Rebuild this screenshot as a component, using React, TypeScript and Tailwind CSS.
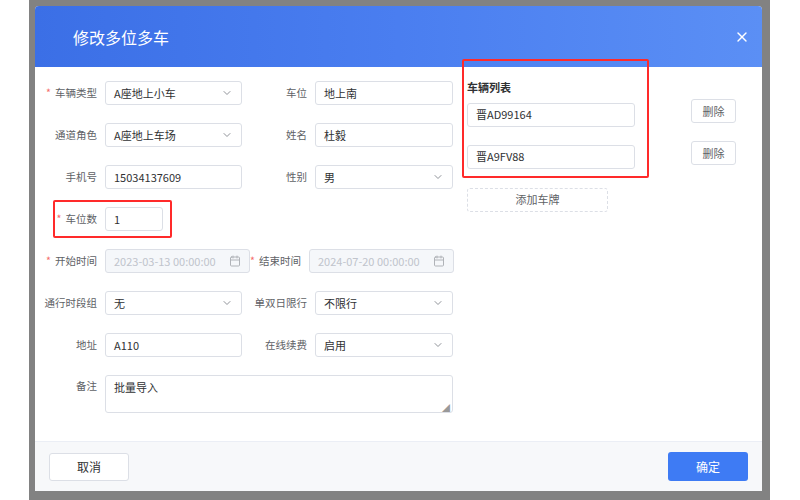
import { ChevronDown, X, Calendar } from "lucide-react";

const font = { fontFamily: '"Noto Sans CJK SC", "Liberation Sans", sans-serif' };

function Label({ text, req, w = "w-[62px]" }: { text: string; req?: boolean; w?: string }) {
  return (
    <div className={`${w} shrink-0 whitespace-nowrap pr-2 text-right text-[10.5px] text-[#606266]`}>
      {req && <span className="mr-1 text-[#f56c6c]">*</span>}
      {text}
    </div>
  );
}

function Input({ value, w, select, disabled, date }: { value: string; w: string; select?: boolean; disabled?: boolean; date?: boolean }) {
  return (
    <div
      className={`flex h-[24px] ${w} shrink-0 items-center justify-between rounded-[3px] border border-[#dcdfe6] px-2 text-[11px] ${
        disabled ? "bg-[#f5f7fa] text-[#c0c4cc]" : "bg-white text-[#303133]"
      }`}
    >
      <span className="whitespace-nowrap">{value}</span>
      {select && <ChevronDown className="h-3 w-3 text-[#909399]" />}
      {date && <Calendar className="h-3 w-3 text-[#b0b3b8]" />}
    </div>
  );
}

export default function App() {
  return (
    <div className="flex h-[500px] w-[800px] bg-white" style={font}>
      <div className="ml-[29px] h-[500px] w-[741px] bg-[#828282] pl-[6px] pt-[6px]">
        <div className="flex h-[485px] w-[727px] flex-col overflow-hidden rounded-t-[4px] bg-white">
          <div className="flex h-[61px] shrink-0 items-center justify-between bg-gradient-to-r from-[#3b6fe6] via-[#4a7ef0] to-[#5b8ff5] pl-[38px] pr-[12px]">
            <span className="text-[16px] text-white">修改多位多车</span>
            <X className="h-4 w-4 text-white" />
          </div>
          <div className="flex flex-1 pt-[14px]">
            <div className="flex w-[427px] flex-col gap-[18px] pl-[8px]">
              <div className="flex items-center">
                <Label text="车辆类型" req />
                <Input value="A座地上小车" w="w-[137px]" select />
                <Label text="车位" w="w-[73px]" />
                <Input value="地上南" w="w-[138px]" />
              </div>
              <div className="flex items-center">
                <Label text="通道角色" />
                <Input value="A座地上车场" w="w-[137px]" select />
                <Label text="姓名" w="w-[73px]" />
                <Input value="杜毅" w="w-[138px]" />
              </div>
              <div className="flex items-center">
                <Label text="手机号" />
                <Input value="15034137609" w="w-[137px]" />
                <Label text="性别" w="w-[73px]" />
                <Input value="男" w="w-[138px]" select />
              </div>
              <div className="flex h-[24px] items-center">
                <div className="-my-[7px] ml-[10px] flex h-[38px] items-center rounded-[2px] border-2 border-[#ff2a2a] pr-[7px]">
                  <Label text="车位数" req w="w-[50px]" />
                  <Input value="1" w="w-[58px]" />
                </div>
              </div>
              <div className="flex items-center">
                <Label text="开始时间" req />
                <Input value="2023-03-13 00:00:00" w="w-[145px]" disabled date />
                <Label text="结束时间" req w="w-[59px]" />
                <Input value="2024-07-20 00:00:00" w="w-[145px]" disabled date />
              </div>
              <div className="flex items-center">
                <Label text="通行时段组" />
                <Input value="无" w="w-[137px]" select />
                <Label text="单双日限行" w="w-[73px]" />
                <Input value="不限行" w="w-[138px]" select />
              </div>
              <div className="flex items-center">
                <Label text="地址" />
                <Input value="A110" w="w-[137px]" />
                <Label text="在线续费" w="w-[73px]" />
                <Input value="启用" w="w-[138px]" select />
              </div>
              <div className="flex items-start">
                <div className="pt-[3px]">
                  <Label text="备注" />
                </div>
                <div className="relative h-[38px] w-[348px] rounded-[3px] border border-[#dcdfe6] px-2 pt-[3px] text-[11px] text-[#303133]">
                  批量导入
                  <span className="absolute bottom-0 right-[2px] text-[8px] leading-none text-[#999]">◢</span>
                </div>
              </div>
            </div>
            <div className="-mt-[22px] flex flex-col">
              <div className="flex items-start">
                <div className="w-[187px] rounded-[2px] border-2 border-[#ff2a2a] px-[3px] pb-[7px] pt-[18px]">
                  <div className="mb-[7px] text-[11px] font-bold text-[#303133]">车辆列表</div>
                  <Input value="晋AD99164" w="w-[168px]" />
                  <div className="h-[18px]" />
                  <Input value="晋A9FV88" w="w-[168px]" />
                </div>
                <div className="ml-[42px] mt-[40px] flex flex-col gap-[18px]">
                  <div className="flex h-[24px] w-[45px] items-center justify-center rounded-[3px] border border-[#dcdfe6] text-[11px] text-[#606266]">删除</div>
                  <div className="flex h-[24px] w-[45px] items-center justify-center rounded-[3px] border border-[#dcdfe6] text-[11px] text-[#606266]">删除</div>
                </div>
              </div>
              <div className="ml-[5px] mt-[10px] flex h-[24px] w-[141px] items-center justify-center rounded-[3px] border border-dashed border-[#dcdfe6] text-[11px] text-[#606266]">
                添加车牌
              </div>
            </div>
          </div>
          <div className="flex h-[50px] shrink-0 items-center justify-between border-t border-[#ebeef5] bg-[#f7f8fa] pl-[14px] pr-[14px]">
            <div className="flex h-[28px] w-[80px] items-center justify-center rounded-[3px] border border-[#dcdfe6] bg-white text-[12px] text-[#303133]">取消</div>
            <div className="flex h-[29px] w-[80px] items-center justify-center rounded-[3px] bg-[#3e7bf4] text-[12px] text-white">确定</div>
          </div>
        </div>
      </div>
    </div>
  );
}
